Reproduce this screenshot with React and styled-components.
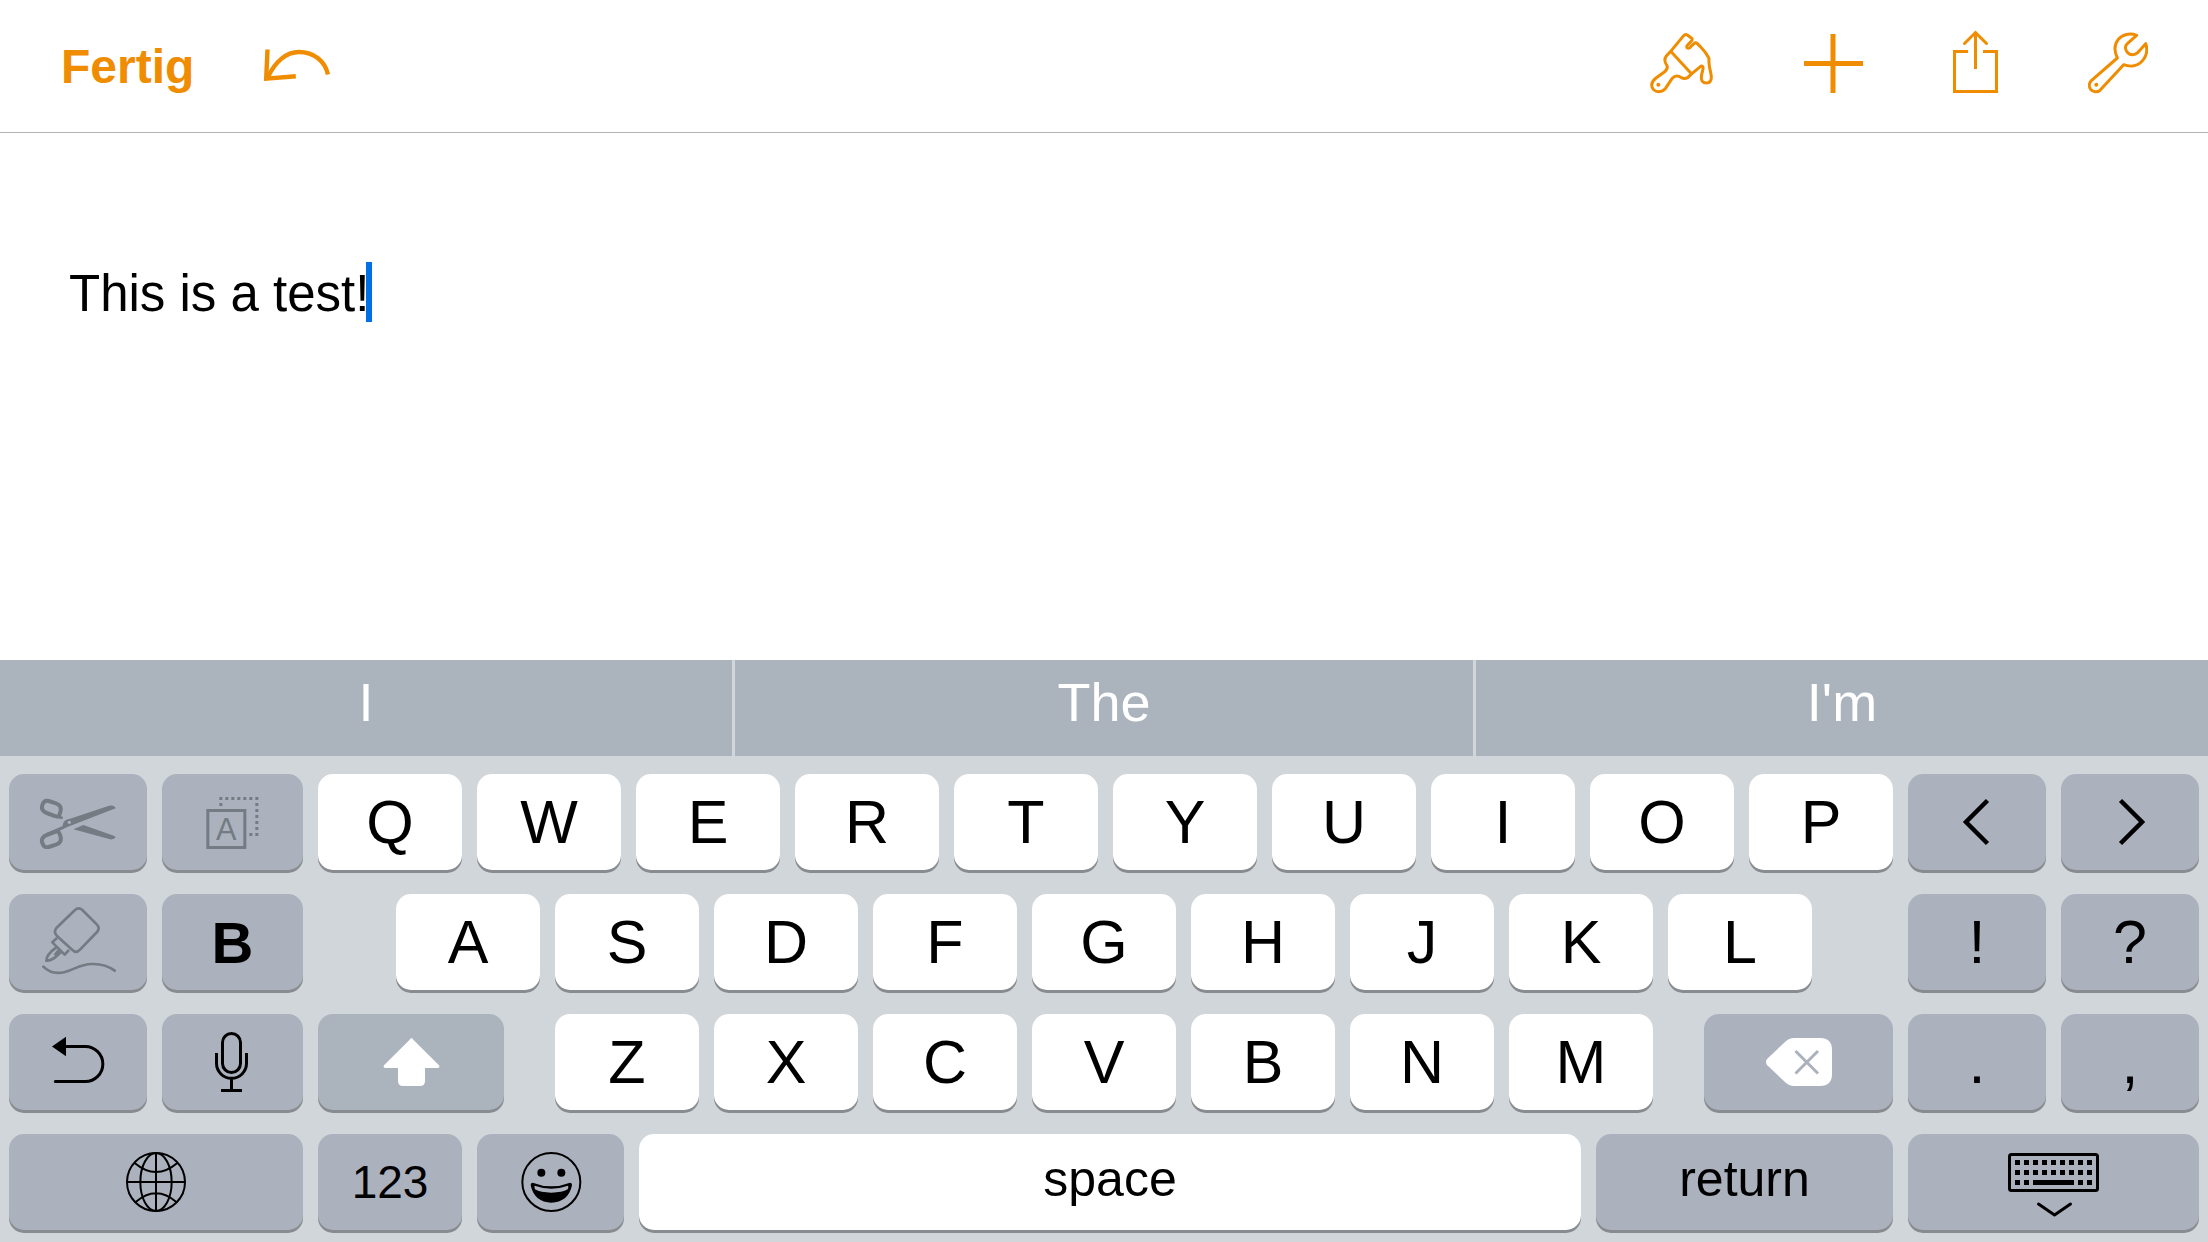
import { useState } from "react";
import styled, { createGlobalStyle } from "styled-components";

const colors = {
  accent: "#f08c00",
  caret: "#0070e6",
  special: "#abb2be",
  bar: "#abb3bd",
  tray: "#d1d6da",
  muted: "#737b83",
  shadow: "#888b8f",
};

function App() {
  const [text, setText] = useState("This is a test!");

  return (
    <>
      <GlobalStyle />
      <Screen>
        <Toolbar>
          <ToolGroup $gap="70px">
            <Done type="button">Fertig</Done>
            <Tool type="button" aria-label="Undo"><UndoIcon /></Tool>
          </ToolGroup>
          <ToolGroup $gap="90px" $lift>
            <Tool type="button" aria-label="Format"><BrushIcon /></Tool>
            <Tool type="button" aria-label="Insert"><PlusIcon /></Tool>
            <Tool type="button" aria-label="Share"><ShareIcon /></Tool>
            <Tool type="button" aria-label="Tools"><WrenchIcon /></Tool>
          </ToolGroup>
        </Toolbar>

        <Editor>
          <TextLine
            aria-label="Document text"
            value={text}
            onChange={(e) => setText(e.target.value)}
          />
          <Caret />
        </Editor>

        <Keyboard>
          <Suggestions>
            <Suggestion type="button" $w={732}>I</Suggestion>
            <Suggestion type="button" $w={738}>The</Suggestion>
            <Suggestion type="button" $w={732}>I'm</Suggestion>
          </Suggestions>

          <Rows>
            <Row>
              <Key type="button" $w={138} $special $muted aria-label="Cut"><CutIcon /></Key>
              <Key type="button" $w={141} $special $muted aria-label="Select"><SelectIcon /></Key>
              <Letters keys="QWERTYUIOP" />
              <Key type="button" $w={138} $special aria-label="Cursor left"><LeftIcon /></Key>
              <Key type="button" $w={138} $special aria-label="Cursor right"><RightIcon /></Key>
            </Row>

            <Row>
              <Key type="button" $w={138} $special $muted aria-label="Paste"><GlueIcon /></Key>
              <Key type="button" $w={141} $special $size="58px" $bold>B</Key>
              <Spacer $w={63} />
              <Letters keys="ASDFGHJKL" />
              <Spacer $w={66} />
              <Key type="button" $w={138} $special>!</Key>
              <Key type="button" $w={138} $special>?</Key>
            </Row>

            <Row>
              <Key type="button" $w={138} $special aria-label="Undo typing"><BackIcon /></Key>
              <Key type="button" $w={141} $special aria-label="Dictate"><MicIcon /></Key>
              <ShiftKey type="button" $w={186} aria-label="Shift"><ShiftIcon /></ShiftKey>
              <Spacer $w={21} />
              <Letters keys="ZXCVBNM" />
              <Spacer $w={21} />
              <Key type="button" $w={189} $special aria-label="Delete"><DeleteIcon /></Key>
              <Key type="button" $w={138} $special>.</Key>
              <Key type="button" $w={138} $special>,</Key>
            </Row>

            <Row>
              <Key type="button" $w={294} $special aria-label="Next keyboard"><GlobeIcon /></Key>
              <Key type="button" $w={144} $special $size="46px">123</Key>
              <Key type="button" $w={147} $special aria-label="Emoji"><EmojiIcon /></Key>
              <WordKey type="button" $w={942} $size="50px">space</WordKey>
              <WordKey type="button" $w={297} $special $size="50px">return</WordKey>
              <Key type="button" $w={291} $special aria-label="Hide keyboard"><KeyboardIcon /></Key>
            </Row>
          </Rows>
        </Keyboard>
      </Screen>
    </>
  );
}

const Letters = ({ keys }) =>
  keys.split("").map((k) => (
    <Key key={k} type="button" $w={144}>{k}</Key>
  ));

/* ---------- toolbar icons ---------- */

const UndoIcon = () => (
  <Icon width="66" height="34" viewBox="0 0 66 34" strokeWidth="4.4">
    <path d="M3.5 .5 2.2 29.6 31.8 27.2" />
    <path d="M4 28C11 13 22 3 35 3 50 3 61 12 64 25.5" />
  </Icon>
);

const BrushIcon = () => (
  <Icon width="63" height="64" viewBox="30 30 189 192" strokeWidth="9" strokeLinejoin="round">
    <path d="M92 94 131 47Q136 41 142 45L153 53Q159 57 155 62L141 77Q138 84 145 85Q150 85 153 79L162 71Q167 66 172 71L182 81Q199 98 207 115C205 140 214 158 214 172C214 184 207 189 199 189C189 189 183 183 184 172C184 160 191 148 189 141Q186 136 181 140L153 163L143 173Q133 178 124 173C115 166 104 165 96 176L76 206C70 214 62 215 56 215C44 215 35 206 35 195C36 184 40 180 48 174L74 155Q85 147 81 137C73 126 73 116 79 108Z" />
    <path d="M92 94 153 160" />
    <circle cx="55" cy="194" r="6" fill="currentColor" stroke="none" />
  </Icon>
);

const PlusIcon = () => (
  <Icon width="60" height="64" viewBox="0 0 60 64" strokeWidth="5">
    <path d="M30 4V63M1 33.5H60" />
  </Icon>
);

const ShareIcon = () => (
  <Icon width="45" height="64" viewBox="0 0 45 64" strokeWidth="3">
    <path d="M15 21.5H1.5V61.5H43.5V21.5H30M22.5 2V39" />
    <path d="M11.5 13.5 22.5 2.5 33.5 13.5" strokeLinecap="round" />
  </Icon>
);

const WrenchIcon = () => (
  <Icon width="60" height="64" viewBox="54 30 180 192" strokeWidth="9" strokeLinejoin="round">
    <path d="M200 46C180 38 158 43 145 58 132 74 133 95 142 114L64 182C56 190 57 201 62 208 69 217 82 218 90 211L161 134C180 141 202 139 216 124 231 107 233 88 227 71L203 98C195 106 180 106 173 98 165 90 164 78 172 71Z" />
    <circle cx="79" cy="194" r="6" fill="currentColor" stroke="none" />
  </Icon>
);

/* ---------- key icons ---------- */

const CutIcon = () => (
  <Icon width="80" height="54" viewBox="114 435 240 162" strokeWidth="12">
    <path d="M146 453 168 460C181 464 185 474 181 486 178 498 175 502 165 498L140 489C128 485 123 475 127 465 130 455 137 451 146 453Z" />
    <path d="M146 591 168 584C181 580 185 570 181 558 178 546 175 542 165 546L140 555C128 559 123 569 127 579 130 589 137 593 146 591Z" />
    <path d="M170 500 188 504" strokeWidth="8" />
    <g fill="currentColor" stroke="none">
      <path d="M140 549 188 528C189 516 196 508 208 507L325 468Q342 463 347 475L200 532 160 552Z" />
      <path d="M220 538 250 525 335 555Q345 558 347 562 343 569 330 568Z" />
    </g>
    <circle cx="208" cy="517" r="5" fill={colors.special} stroke="none" />
  </Icon>
);

const SelectIcon = () => (
  <Icon width="54" height="54" viewBox="617 435 162 162" strokeWidth="9">
    <rect x="622.5" y="481.5" width="111" height="111" />
    <path d="M657 445.5H774M769.5 459V558M657 463.5H666M747 553.5H756" strokeDasharray="9 9" />
    <IconLetter x="678" y="570" textAnchor="middle">A</IconLetter>
  </Icon>
);

const GlueIcon = () => (
  <Icon width="76" height="72" viewBox="120 78 228 216" strokeWidth="8">
    <path d="M225 90Q236 80 247 90L291 134Q301 145 291 156L240 209Q229 221 218 211L171 168Q159 156 170 143Z" />
    <path d="M171 174 157 187 194 224 207 210M169 202C148 217 139 228 139 242 153 243 164 236 184 215M178 208 164 226" strokeLinejoin="round" />
    <path d="M130 260C150 280 172 282 195 276 225 268 240 253 275 252 300 251 325 258 344 272" strokeLinecap="round" />
  </Icon>
);

const LeftIcon = () => (
  <Icon width="30" height="48" viewBox="0 0 30 48" strokeWidth="4.5">
    <path d="M25.5 2.5 4 24 25.5 45.5" />
  </Icon>
);

const RightIcon = () => (
  <Icon width="30" height="48" viewBox="0 0 30 48" strokeWidth="4.5">
    <path d="M5.5 2.5 27 24 5.5 45.5" />
  </Icon>
);

const BackIcon = () => (
  <Icon width="56" height="56" viewBox="150 462 168 168" strokeWidth="9">
    <path d="M166 604.5H256A52.5 52.5 0 0 0 256 499.5H196" strokeLinecap="round" />
    <path d="M156 499.5 198 470V529Z" fill="currentColor" stroke="none" />
  </Icon>
);

const MicIcon = () => (
  <Icon width="37" height="62" viewBox="642 453 111 186" strokeWidth="9">
    <rect x="667.5" y="460.5" width="54" height="117" rx="27" />
    <path d="M649.5 519V550A45 45 0 0 0 739.5 550V519M694.5 597V631M663 631.5H726" />
  </Icon>
);

const ShiftIcon = () => (
  <Icon width="58" height="54" viewBox="1146 465 174 162">
    <path
      d="M1234 475Q1237 475 1240 479L1317 556Q1321 564 1313 564H1275V603Q1275 618 1260 618H1209Q1194 618 1194 603V564H1157Q1148 564 1152 556L1229 479Q1231 475 1234 475Z"
      fill="#fff"
    />
  </Icon>
);

const DeleteIcon = () => (
  <Icon width="66" height="48" viewBox="0 0 66 48">
    <path d="M1 21 19 4Q23 0 28 0H54Q66 0 66 12V36Q66 48 54 48H28Q23 48 19 44L1 27Q-1 24 1 21Z" fill="#fff" />
    <path d="M29.5 13 52 35.5M52 13 29.5 35.5" stroke={colors.special} strokeWidth="3" />
  </Icon>
);

const GlobeIcon = () => (
  <Icon width="62" height="62" viewBox="375 813 186 186" strokeWidth="6">
    <circle cx="468" cy="906" r="87" />
    <ellipse cx="468" cy="906" rx="47" ry="87" />
    <path d="M468 819V993M381 906H555M404 849Q468 903 532 849M406 967Q468 913 530 967" />
  </Icon>
);

const EmojiIcon = () => (
  <Icon width="62" height="62" viewBox="59 453 186 186" strokeWidth="6">
    <circle cx="153" cy="546" r="87" />
    <g fill="currentColor" stroke="none">
      <circle cx="123" cy="518" r="12" />
      <circle cx="183" cy="518" r="12" />
      <path
        fillRule="evenodd"
        d="M97 548Q153 570 209 548 216 549 215 556C208 590 185 608 153 608 121 608 98 590 91 556Q90 549 97 548ZM103 557Q101 559 104 568 120 578 153 578 186 578 202 568 206 559 203 557 153 575 103 557Z"
      />
    </g>
  </Icon>
);

const dotRows = [
  { y: 14, xs: [7, 16, 25, 34, 43, 52, 61, 70, 79] },
  { y: 24, xs: [7, 16, 25, 34, 43, 52, 61, 70, 79] },
  { y: 34, xs: [7, 16, 70, 79] },
];

const KeyboardIcon = () => (
  <Icon width="91" height="72" viewBox="0 0 91 72" strokeWidth="3">
    <rect x="1.5" y="8.5" width="88" height="36" rx="2" />
    <g fill="currentColor" stroke="none">
      {dotRows.map(({ y, xs }) => xs.map((x) => <rect key={`${x}-${y}`} x={x} y={y} width="5" height="5" />))}
      <rect x="25" y="34" width="41" height="5" />
    </g>
    <path d="M30.5 58 46.5 69 62.5 58" strokeLinecap="round" strokeLinejoin="round" />
  </Icon>
);

/* ---------- styles ---------- */

const GlobalStyle = createGlobalStyle`
  * {
    box-sizing: border-box;
  }
  body {
    margin: 0;
    background: #fff;
  }
  body, button, input {
    font-family: "Liberation Sans", Arial, sans-serif;
  }
  button {
    margin: 0;
    padding: 0;
    border: none;
    background: none;
    color: inherit;
    cursor: pointer;
  }
`;

const Screen = styled.div`
  display: flex;
  flex-direction: column;
  min-height: 100vh;
  color: #000;
`;

const Toolbar = styled.header`
  display: flex;
  justify-content: space-between;
  height: 133px;
  padding: 0 60px 0 61px;
  border-bottom: 1px solid #b2b2b2;
  color: ${colors.accent};
`;

const ToolGroup = styled.div`
  display: flex;
  align-items: center;
  gap: ${(props) => props.$gap};
  padding-bottom: ${(props) => (props.$lift ? "8px" : "0")};
`;

const Tool = styled.button`
  display: flex;
`;

const Done = styled.button`
  padding-top: 2px;
  font-size: 48px;
  font-weight: bold;
  line-height: 60px;
`;

const Editor = styled.main`
  display: flex;
  flex: 1;
  align-items: flex-start;
  padding: 129px 69px 0;
`;

const TextLine = styled.input`
  field-sizing: content;
  height: 60px;
  padding: 2px 0 0;
  border: none;
  outline: none;
  background: none;
  color: #000;
  caret-color: transparent;
  font-size: 51px;
`;

const Caret = styled.span`
  width: 6px;
  height: 60px;
  margin-left: -3px;
  background: ${colors.caret};
`;

const Keyboard = styled.section`
  background: ${colors.tray};
`;

const Suggestions = styled.div`
  display: flex;
  gap: 3px;
  height: 96px;
`;

const Suggestion = styled.button`
  flex: ${(props) => props.$w} 1 0;
  padding-bottom: 12px;
  background: ${colors.bar};
  color: #fff;
  font-size: 54px;
`;

const Rows = styled.div`
  display: grid;
  gap: 24px;
  padding: 18px 9px 12px;
`;

const Row = styled.div`
  display: flex;
  gap: 15px;
`;

const Key = styled.button`
  display: flex;
  flex: ${(props) => props.$w} 1 0;
  align-items: center;
  justify-content: center;
  min-width: 0;
  height: 96px;
  border-radius: 15px;
  background: ${(props) => (props.$special ? colors.special : "#fff")};
  box-shadow: 0 3px 0 ${colors.shadow};
  color: ${(props) => (props.$muted ? colors.muted : "#000")};
  font-size: ${(props) => props.$size || "61px"};
  font-weight: ${(props) => (props.$bold ? "bold" : "normal")};
`;

const ShiftKey = styled(Key)`
  background: ${colors.bar};
`;

const WordKey = styled(Key)`
  padding-bottom: 6px;
`;

const Spacer = styled.span`
  flex: ${(props) => props.$w} 1 0;
`;

const Icon = styled.svg.attrs((props) => ({
  fill: "none",
  stroke: props.strokeWidth ? "currentColor" : "none",
  "aria-hidden": true,
}))`
  flex: none;
`;

const IconLetter = styled.text`
  fill: currentColor;
  stroke: none;
  font-family: "Liberation Sans", Arial, sans-serif;
  font-size: 92px;
`;

export default App;
